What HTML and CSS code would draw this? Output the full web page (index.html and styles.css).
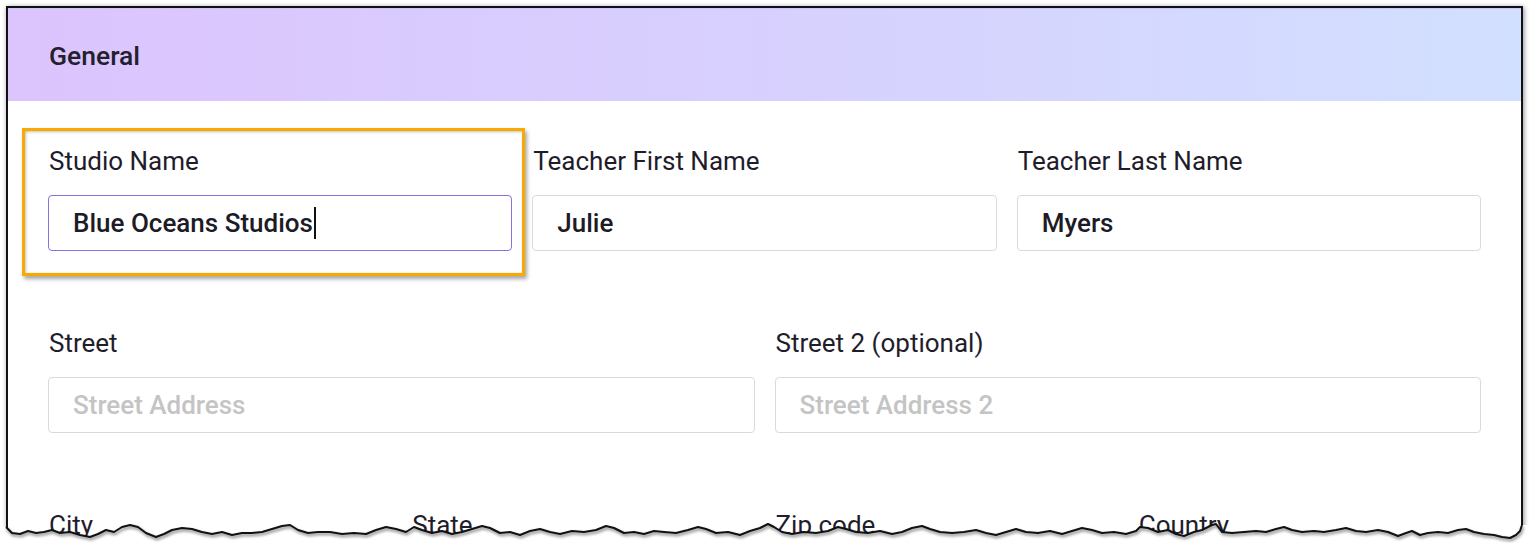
FILE: index.html
```html
<!DOCTYPE html>
<html lang="en">
<head>
<meta charset="utf-8">
<title>General settings</title>
<link rel="stylesheet" href="styles.css">
</head>
<body>
<div class="frame">
  <div class="header">General</div>
  <div class="content">
    <div class="row cols-3">
      <div class="field highlighted">
        <div class="label">Studio Name</div>
        <div class="input focused"><span class="value">Blue Oceans Studios</span><span class="caret"></span></div>
        <div class="callout"></div>
      </div>
      <div class="field">
        <div class="label">Teacher First Name</div>
        <div class="input"><span class="value">Julie</span></div>
      </div>
      <div class="field">
        <div class="label">Teacher Last Name</div>
        <div class="input"><span class="value">Myers</span></div>
      </div>
    </div>
    <div class="row cols-2">
      <div class="field">
        <div class="label">Street</div>
        <div class="input"><span class="placeholder">Street Address</span></div>
      </div>
      <div class="field">
        <div class="label">Street 2 (optional)</div>
        <div class="input"><span class="placeholder">Street Address 2</span></div>
      </div>
    </div>
    <div class="row cols-4">
      <div class="field"><div class="label">City</div></div>
      <div class="field"><div class="label">State</div></div>
      <div class="field"><div class="label">Zip code</div></div>
      <div class="field"><div class="label">Country</div></div>
    </div>
  </div>
</div>
<svg class="torn" width="1530" height="42" viewBox="0 0 1530 42" aria-hidden="true">
  <path class="torn-fill" d="M0,42 L0,22 L6,22 L12,28 L20,29 L28,26 L36,28 L44,27 L52,25 L60,28 L70,27 L80,30 L90,32 L98,29 L106,25 L114,27 L122,22 L130,20 L138,22 L146,28 L156,32 L164,29 L172,25 L182,23 L192,24 L202,27 L212,29 L222,27 L232,30 L242,28 L252,28 L262,27 L272,24 L282,21 L290,20 L298,25 L308,28 L318,27 L330,27 L342,29 L354,28 L366,29 L376,25 L386,22 L396,24 L406,27 L414,22 L422,25 L432,28 L442,26 L452,29 L462,27 L472,24 L482,21 L490,23 L500,28 L510,27 L520,30 L530,26 L540,24 L550,27 L560,29 L572,26 L584,27 L596,25 L606,21 L614,23 L624,28 L634,27 L644,29 L654,26 L664,27 L676,28 L688,25 L698,22 L706,24 L716,28 L728,27 L740,30 L750,26 L760,23 L768,19 L774,22 L782,27 L792,29 L804,27 L816,28 L828,26 L838,22 L846,24 L856,27 L868,28 L880,26 L892,29 L902,27 L912,23 L922,21 L930,24 L940,27 L952,28 L964,27 L976,25 L986,28 L996,30 L1006,27 L1016,24 L1026,27 L1038,28 L1050,26 L1062,29 L1072,26 L1082,23 L1092,25 L1102,28 L1114,27 L1126,29 L1136,26 L1140,22 L1148,23 L1158,27 L1168,25 L1176,29 L1184,31 L1194,27 L1202,25 L1212,20 L1216,19 L1222,27 L1232,28 L1244,27 L1256,26 L1266,27 L1276,24 L1284,22 L1292,25 L1302,27 L1314,26 L1324,27 L1336,25 L1346,23 L1356,26 L1366,27 L1378,25 L1388,27 L1398,31 L1406,28 L1412,26 L1420,30 L1428,28 L1438,27 L1448,28 L1458,25 L1466,24 L1474,27 L1484,29 L1494,30 L1502,32 L1510,33 L1516,30 L1520,26 L1522,20 L1530,20 L1530,42 Z"/>
  <path class="torn-line" d="M6,22 L12,28 L20,29 L28,26 L36,28 L44,27 L52,25 L60,28 L70,27 L80,30 L90,32 L98,29 L106,25 L114,27 L122,22 L130,20 L138,22 L146,28 L156,32 L164,29 L172,25 L182,23 L192,24 L202,27 L212,29 L222,27 L232,30 L242,28 L252,28 L262,27 L272,24 L282,21 L290,20 L298,25 L308,28 L318,27 L330,27 L342,29 L354,28 L366,29 L376,25 L386,22 L396,24 L406,27 L414,22 L422,25 L432,28 L442,26 L452,29 L462,27 L472,24 L482,21 L490,23 L500,28 L510,27 L520,30 L530,26 L540,24 L550,27 L560,29 L572,26 L584,27 L596,25 L606,21 L614,23 L624,28 L634,27 L644,29 L654,26 L664,27 L676,28 L688,25 L698,22 L706,24 L716,28 L728,27 L740,30 L750,26 L760,23 L768,19 L774,22 L782,27 L792,29 L804,27 L816,28 L828,26 L838,22 L846,24 L856,27 L868,28 L880,26 L892,29 L902,27 L912,23 L922,21 L930,24 L940,27 L952,28 L964,27 L976,25 L986,28 L996,30 L1006,27 L1016,24 L1026,27 L1038,28 L1050,26 L1062,29 L1072,26 L1082,23 L1092,25 L1102,28 L1114,27 L1126,29 L1136,26 L1140,22 L1148,23 L1158,27 L1168,25 L1176,29 L1184,31 L1194,27 L1202,25 L1212,20 L1216,19 L1222,27 L1232,28 L1244,27 L1256,26 L1266,27 L1276,24 L1284,22 L1292,25 L1302,27 L1314,26 L1324,27 L1336,25 L1346,23 L1356,26 L1366,27 L1378,25 L1388,27 L1398,31 L1406,28 L1412,26 L1420,30 L1428,28 L1438,27 L1448,28 L1458,25 L1466,24 L1474,27 L1484,29 L1494,30 L1502,32 L1510,33 L1516,30 L1520,26 L1522,20"/>
</svg>
</body>
</html>
```
FILE: styles.css
```css
html, body {
  margin: 0;
  padding: 0;
  background: #ffffff;
}

body {
  position: relative;
  width: 1530px;
  height: 547px;
  overflow: hidden;
  font-family: Roboto, "Liberation Sans", Arial, sans-serif;
  color: #1f1d2b;
}

.frame {
  box-sizing: border-box;
  width: 1517px;
  height: 534px;
  margin: 6px 0 0 6px;
  border: 2px solid #111114;
  border-bottom: none;
  background: #ffffff;
  box-shadow: 1px 1px 5px rgba(0, 0, 0, 0.45);
  overflow: hidden;
}

.header {
  height: 93px;
  box-sizing: border-box;
  padding-left: 41px;
  display: flex;
  align-items: center;
  font-size: 26.5px;
  font-weight: 500;
  color: #23202e;
  background: linear-gradient(90deg, #dcc4fd 0%, #d7d0fe 50%, #d2e0ff 100%);
  border-top: 1px solid #c9c3ff;
}

.content {
  padding: 45px 40px 0 40px;
  display: flex;
  flex-direction: column;
  gap: 77px;
}

.row {
  display: grid;
  column-gap: 20px;
}

.cols-3 { grid-template-columns: repeat(3, 1fr); }
.cols-2 { grid-template-columns: repeat(2, 1fr); }
.cols-4 { grid-template-columns: repeat(4, 1fr); }

.field {
  display: flex;
  flex-direction: column;
  gap: 19px;
}

.highlighted {
  position: relative;
}

.label {
  font-size: 26px;
  line-height: 30px;
  font-weight: 400;
  color: #1f1d2b;
  padding-left: 1px;
  white-space: nowrap;
}

.input {
  box-sizing: border-box;
  height: 56px;
  border: 1px solid #dadada;
  border-radius: 4px;
  padding-left: 24px;
  display: flex;
  align-items: center;
  font-size: 26px;
  font-weight: 500;
  background: #ffffff;
}

.input.focused {
  border-color: #8b6fe0;
}

.value {
  color: #1c1b26;
}

.placeholder {
  color: #c4c4c4;
}

.caret {
  display: inline-block;
  width: 2px;
  height: 32px;
  margin-left: 1px;
  background: #111111;
}

.callout {
  position: absolute;
  left: -26px;
  right: -13px;
  top: -18px;
  bottom: -25px;
  border: 3px solid #f8aa00;
  box-shadow: 2px 3px 4px rgba(0, 0, 0, 0.35), inset 1px 1px 3px rgba(0, 0, 0, 0.25);
  pointer-events: none;
}

.torn {
  position: absolute;
  left: 0;
  top: 505px;
  display: block;
}

.torn-fill {
  fill: #ffffff;
}

.torn-line {
  fill: none;
  stroke: #111114;
  stroke-width: 2;
  stroke-linejoin: round;
  filter: drop-shadow(1px 2px 1.5px rgba(0, 0, 0, 0.55));
}
```
